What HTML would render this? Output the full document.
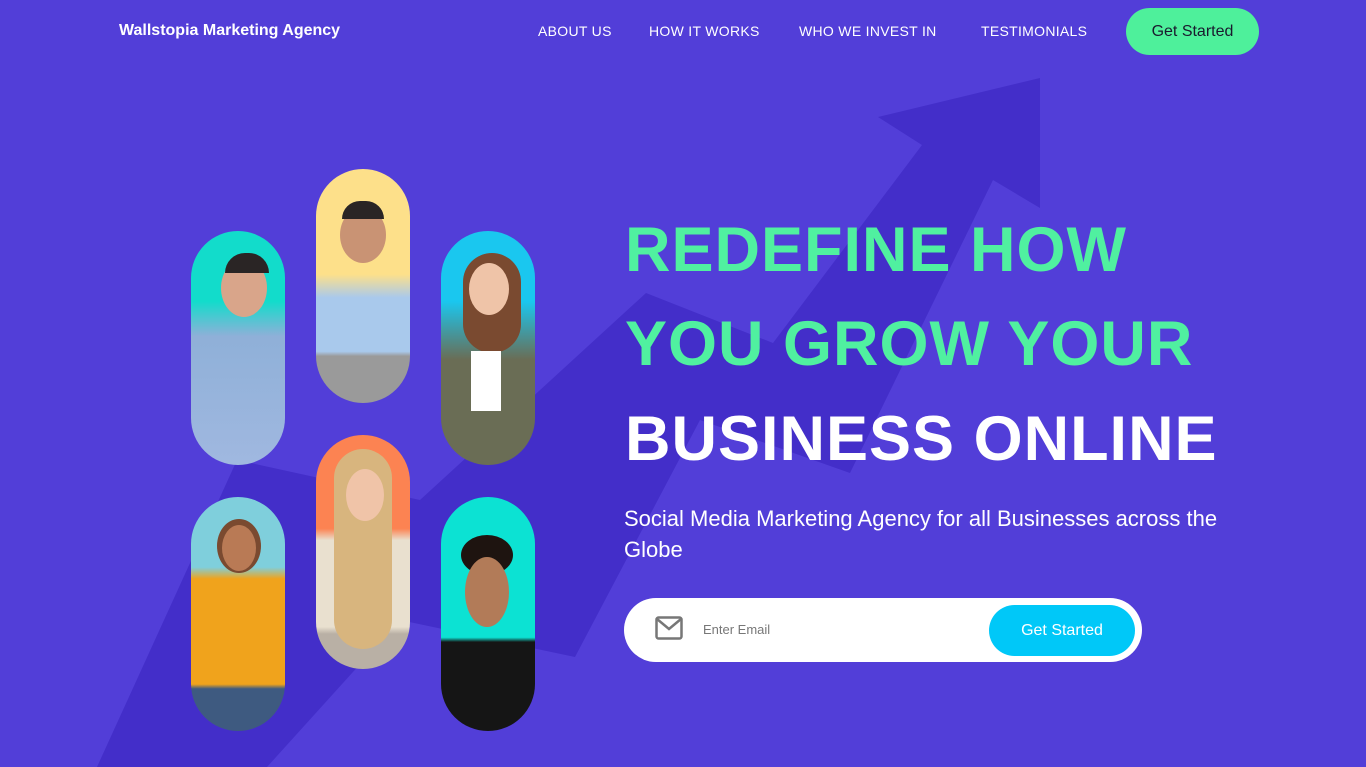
<!DOCTYPE html>
<html><head><meta charset="utf-8"><style>
*{margin:0;padding:0;box-sizing:border-box}
body{width:1366px;height:767px;overflow:hidden;background:#523ed8;font-family:"Liberation Sans",sans-serif;position:relative;color:#fff}
.abs{position:absolute}
.nav a{position:absolute;top:23px;font-size:14px;color:#fff;text-decoration:none;letter-spacing:.3px}
.pill{position:absolute;width:94px;height:234px;border-radius:47px;overflow:hidden}
h1{position:absolute;left:625px;font-size:63px;font-weight:bold;letter-spacing:1px;white-space:nowrap;line-height:1}
</style></head><body>
<svg class="abs" style="left:0;top:0" width="1366" height="767">
<polygon fill="#432ec9" points="97,767 237,460 420,500 646,293 773,343 922,145 878,117 1040,78 1040,208 993,180 850,473 700,420 575,657 400,620 267,767"/>
</svg>
<div class="abs" style="left:119px;top:22px;font-size:16px;font-weight:bold">Wallstopia Marketing Agency</div>
<div class="nav">
<a style="left:538px">ABOUT US</a><a style="left:649px">HOW IT WORKS</a><a style="left:799px">WHO WE INVEST IN</a><a style="left:981px">TESTIMONIALS</a>
</div>
<div class="abs" style="left:1126px;top:8px;width:133px;height:47px;border-radius:24px;background:#4ef09b;color:#1a1a2e;font-size:16px;text-align:center;line-height:47px">Get Started</div>

<div class="pill" style="left:191px;top:231px;background:linear-gradient(#12dccb 0,#12dccb 30%,#8fb0d8 45%,#a0b8e0 100%)">
 <div class="abs" style="left:30px;top:28px;width:46px;height:58px;border-radius:50%;background:#d9a58a"></div>
 <div class="abs" style="left:34px;top:22px;width:44px;height:20px;border-radius:20px 20px 0 0;background:#2a2525"></div></div>
<div class="pill" style="left:316px;top:169px;background:linear-gradient(#fde08a 0,#fde08a 45%,#a9c9ec 55%,#a9c9ec 78%,#9a9a9a 80%)">
 <div class="abs" style="left:24px;top:38px;width:46px;height:56px;border-radius:50%;background:#c99374"></div>
 <div class="abs" style="left:26px;top:32px;width:42px;height:18px;border-radius:20px 20px 0 0;background:#2a2525"></div></div>
<div class="pill" style="left:441px;top:231px;background:linear-gradient(#1ac7ef 0,#1ac7ef 30%,#6a6d55 55%,#6a6d55 100%)">
 <div class="abs" style="left:22px;top:22px;width:58px;height:100px;border-radius:30px;background:#7a4a30"></div>
 <div class="abs" style="left:28px;top:32px;width:40px;height:52px;border-radius:50%;background:#efc4a8"></div>
 <div class="abs" style="left:30px;top:120px;width:30px;height:60px;background:#fff"></div></div>
<div class="pill" style="left:191px;top:497px;background:linear-gradient(#7fcfdc 0,#7fcfdc 30%,#f0a31c 35%,#f0a31c 80%,#3e5a80 82%)">
 <div class="abs" style="left:26px;top:22px;width:44px;height:54px;border-radius:50%;background:#7a4a30"></div>
 <div class="abs" style="left:31px;top:28px;width:34px;height:46px;border-radius:50%;background:#b97a55"></div></div>
<div class="pill" style="left:316px;top:435px;background:linear-gradient(#fc8352 0,#fc8352 40%,#e9e0cf 45%,#e9e0cf 82%,#b9b0a5 85%)">
 <div class="abs" style="left:18px;top:14px;width:58px;height:200px;border-radius:30px;background:#d8b57e"></div>
 <div class="abs" style="left:30px;top:34px;width:38px;height:52px;border-radius:50%;background:#f0c4a8"></div></div>
<div class="pill" style="left:441px;top:497px;background:linear-gradient(#0ce2d3 0,#0ce2d3 60%,#151515 62%)">
 <div class="abs" style="left:20px;top:38px;width:52px;height:40px;border-radius:50%;background:#1e1410"></div>
 <div class="abs" style="left:24px;top:60px;width:44px;height:70px;border-radius:50%;background:#b27b58"></div></div>

<h1 style="top:219px;color:#50f0a0">REDEFINE HOW</h1>
<h1 style="top:313px;color:#50f0a0">YOU GROW YOUR</h1>
<h1 style="top:408px;color:#fff">BUSINESS ONLINE</h1>
<div class="abs" style="left:624px;top:503px;width:630px;font-size:22px;line-height:31px">Social Media Marketing Agency for all Businesses across the Globe</div>
<div class="abs" style="left:624px;top:598px;width:518px;height:64px;border-radius:32px;background:#fff">
 <svg class="abs" style="left:31px;top:18px" width="28" height="24" viewBox="0 0 28 24"><rect x="1.5" y="1.5" width="25" height="21" rx="2" fill="none" stroke="#777" stroke-width="2.5"/><path d="M2 3 L14 13 L26 3" fill="none" stroke="#777" stroke-width="2.5"/></svg>
 <div class="abs" style="left:79px;top:24px;font-size:13px;color:#777">Enter Email</div>
 <div class="abs" style="left:365px;top:7px;width:146px;height:51px;border-radius:26px;background:#00c8f8;color:#fff;font-size:16px;text-align:center;line-height:51px">Get Started</div>
</div>
</body></html>
